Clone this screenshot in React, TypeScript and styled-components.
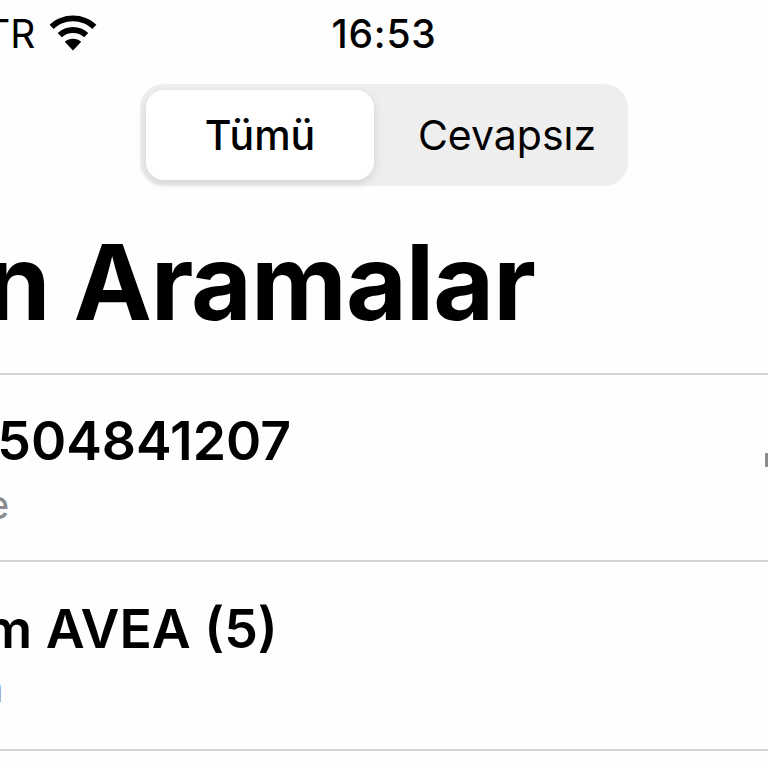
import React from 'react';
import styled, { createGlobalStyle } from 'styled-components';

const GlobalStyle = createGlobalStyle`
  html, body {
    margin: 0;
    padding: 0;
    background: #fefefe;
  }
`;

const Screen = styled.div`
  width: 768px;
  height: 768px;
  overflow: hidden;
  background: #fefefe;
  color: #000;
  font-family: Inter, "Liberation Sans", sans-serif;
`;

const StatusBar = styled.div`
  height: 66px;
  display: grid;
  grid-template-columns: 1fr auto 1fr;
  align-items: center;
`;

const Carrier = styled.div`
  display: flex;
  align-items: center;
  gap: 14px;
  margin-left: -15px;
  font-size: 39px;
  font-weight: 400;
`;

const Clock = styled.div`
  font-size: 39px;
  font-weight: 500;
  letter-spacing: 0.8px;
`;

const SegmentWrap = styled.div`
  display: flex;
  justify-content: center;
  margin-top: 18px;
`;

const Segmented = styled.div`
  width: 488px;
  height: 102px;
  box-sizing: border-box;
  padding: 6px;
  display: flex;
  background: #eeeeef;
  border-radius: 24px;
`;

const Segment = styled.div<{ $active?: boolean }>`
  flex: ${props => (props.$active ? '0 0 228px' : '1')};
  display: flex;
  align-items: center;
  justify-content: center;
  box-sizing: border-box;
  padding-left: ${props => (props.$active ? 0 : 18)}px;
  font-size: 41px;
  font-weight: ${props => (props.$active ? 500 : 400)};
  border-radius: 18px;
  background: ${props => (props.$active ? '#fff' : 'transparent')};
  box-shadow: ${props => (props.$active ? '0 3px 10px rgba(0, 0, 0, 0.12)' : 'none')};
`;

const Title = styled.h1`
  margin: 38px 0 0 -146px;
  font-size: 105px;
  line-height: 116px;
  font-weight: 700;
  letter-spacing: -1px;
  white-space: nowrap;
`;

const List = styled.div`
  margin-top: 33px;
  border-top: 2px solid #d4d4d6;
`;

const Row = styled.div<{ $height: number; $top: number }>`
  height: ${props => props.$height}px;
  box-sizing: border-box;
  padding-top: ${props => props.$top}px;
  border-bottom: 2px solid #d4d4d6;
  position: relative;
`;

const Name = styled.div<{ $offset: number }>`
  margin-left: ${props => props.$offset}px;
  font-size: 53.5px;
  line-height: 60px;
  font-weight: 600;
  white-space: nowrap;
`;

const Sub = styled.div<{ $offset: number; $gap: number }>`
  margin: ${props => props.$gap}px 0 0 ${props => props.$offset}px;
  font-size: 40px;
  line-height: 48px;
  color: #8a8a8e;
  white-space: nowrap;
`;

const Edge = styled.span`
  position: absolute;
  right: 0;
  top: 78px;
  width: 3px;
  height: 14px;
  background: #8c8c8c;
`;

function WifiIcon() {
  return (
    <svg width="48" height="37" viewBox="0 0 48 36" fill="#000">
      <path d="M24 0C15 0 6.8 3.4 0.6 9.2L4.6 13.4C9.8 8.600 16.600 5.800 24 5.800s14.200 2.800 19.400 7.600l4-4.200C41.200 3.400 33 0 24 0z" />
      <path d="M24 11.600c-5.900 0-11.200 2.200-15.300 5.900l4.100 4.200c3-2.600 6.900-4.200 11.200-4.200s8.200 1.600 11.200 4.200l4.100-4.200C35.200 13.800 29.900 11.600 24 11.600z" />
      <path d="M24 23.200c-3.100 0-6 1.200-8.200 3.100L24 35l8.200-8.700c-2.200-1.900-5.100-3.100-8.200-3.100z" />
    </svg>
  );
}

export default function App() {
  return (
    <Screen>
      <GlobalStyle />
      <StatusBar>
        <Carrier>
          TR
          <WifiIcon />
        </Carrier>
        <Clock>16:53</Clock>
        <div />
      </StatusBar>
      <SegmentWrap>
        <Segmented>
          <Segment $active>Tümü</Segment>
          <Segment>Cevapsız</Segment>
        </Segmented>
      </SegmentWrap>
      <Title>Son Aramalar</Title>
      <List>
        <Row $height={187} $top={36}>
          <Name $offset={-38}>0504841207</Name>
          <Sub $offset={-14} $gap={10}>e</Sub>
          <Edge />
        </Row>
        <Row $height={189} $top={37}>
          <Name $offset={-16}>m AVEA (5)</Name>
          <Sub $offset={-20} $gap={5}>n</Sub>
        </Row>
      </List>
    </Screen>
  );
}
